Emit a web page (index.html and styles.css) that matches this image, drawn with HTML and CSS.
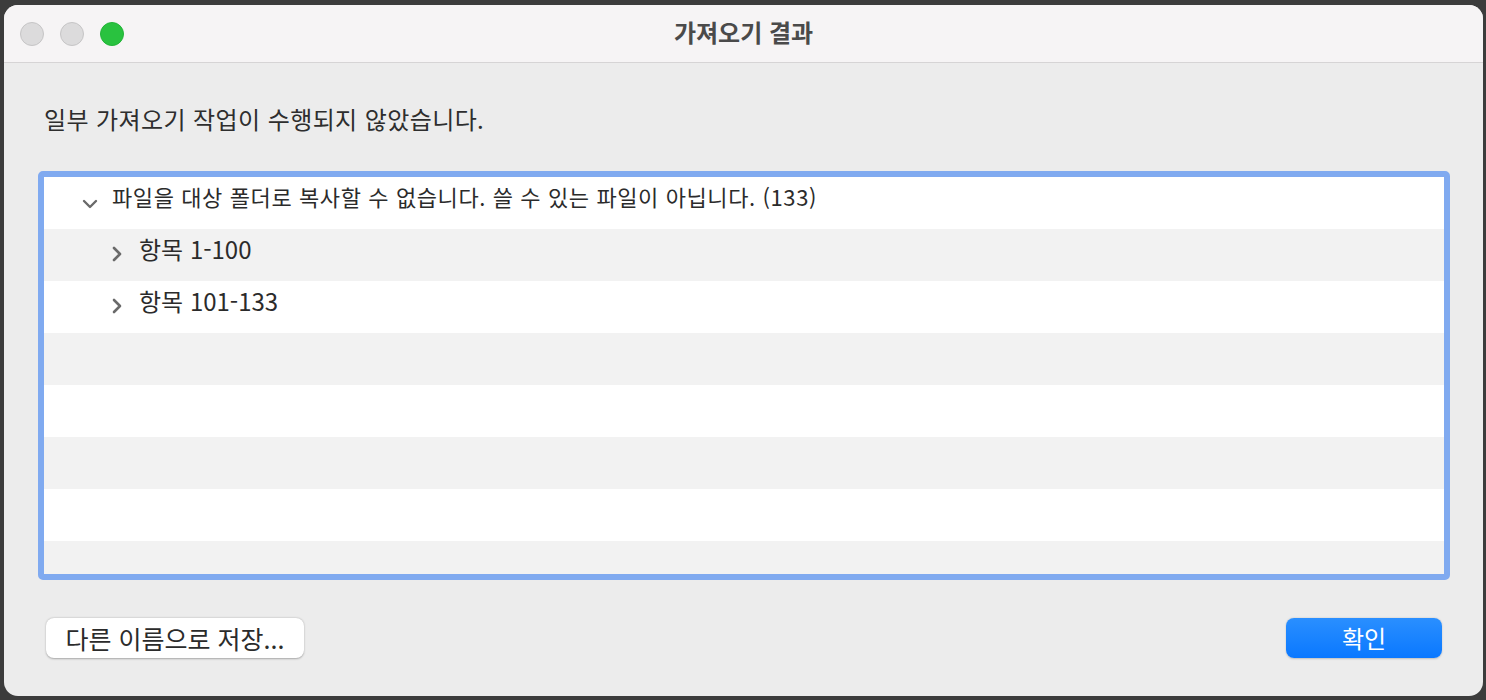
FILE: index.html
```html
<!DOCTYPE html>
<html lang="ko">
<head>
    <meta charset="UTF-8">
    <meta name="viewport" content="width=device-width, initial-scale=1.0">
    <title>가져오기 결과</title>
    <link rel="stylesheet" href="styles.css">
</head>
<body>
    <div class="window">
        <div class="titlebar">
            <div class="lights">
                <span class="light"></span>
                <span class="light"></span>
                <span class="light green"></span>
            </div>
            <div class="title">가져오기 결과</div>
        </div>
        <div class="content">
            <p class="message">일부 가져오기 작업이 수행되지 않았습니다.</p>
            <div class="list">
                <div class="row group">
                    <svg class="chev" width="16" height="10" viewBox="0 0 16 10"><path d="M2 2 L8 8 L14 2" fill="none" stroke="#6a6a6a" stroke-width="2.4" stroke-linecap="round" stroke-linejoin="round"/></svg>
                    <span>파일을 대상 폴더로 복사할 수 없습니다. 쓸 수 있는 파일이 아닙니다. (133)</span>
                </div>
                <div class="row item">
                    <svg class="chev" width="10" height="16" viewBox="0 0 10 16"><path d="M2 2 L8 8 L2 14" fill="none" stroke="#6a6a6a" stroke-width="2.6" stroke-linecap="round" stroke-linejoin="round"/></svg>
                    <span>항목 1-100</span>
                </div>
                <div class="row item">
                    <svg class="chev" width="10" height="16" viewBox="0 0 10 16"><path d="M2 2 L8 8 L2 14" fill="none" stroke="#6a6a6a" stroke-width="2.6" stroke-linecap="round" stroke-linejoin="round"/></svg>
                    <span>항목 101-133</span>
                </div>
                <div class="row"></div>
                <div class="row"></div>
                <div class="row"></div>
                <div class="row"></div>
                <div class="row"></div>
            </div>
            <div class="buttons">
                <button class="btn">다른 이름으로 저장...</button>
                <button class="btn primary">확인</button>
            </div>
        </div>
    </div>
</body>
</html>
```

FILE: styles.css
```css
body {
    margin: 0;
    padding: 5px 3px 4px 4px;
    background-color: #3c3c3c;
    font-family: "Noto Sans CJK KR", "Noto Sans", sans-serif;
    color: #2b2b2b;
}
.window {
    height: 691px;
    border-radius: 14px;
    overflow: hidden;
    background-color: #ececec;
    display: flex;
    flex-direction: column;
}
.titlebar {
    position: relative;
    height: 57px;
    background-color: #f6f4f5;
    border-bottom: 1px solid #d6d4d5;
    display: flex;
    align-items: center;
    justify-content: center;
}
.lights {
    position: absolute;
    left: 16px;
    top: 17px;
    display: flex;
    gap: 16px;
}
.light {
    width: 22px;
    height: 22px;
    border-radius: 50%;
    background-color: #dcdbdc;
    border: 1px solid #c6c5c6;
}
.light.green {
    background-color: #29c23f;
    border-color: #22b437;
}
.title {
    font-size: 24px;
    font-weight: bold;
    color: #4a4a4a;
    margin-top: -4px;
}
.content {
    flex: 1;
    padding: 0 33px 0 34px;
    display: flex;
    flex-direction: column;
}
.message {
    margin: 40px 0 0 6px;
    font-size: 24px;
    letter-spacing: 0.4px;
    line-height: 32px;
    color: #2e2e2e;
}
.list {
    margin-top: 36px;
    height: 397px;
    border: 6px solid #80aaf0;
    border-radius: 5px;
    background-color: #fff;
    overflow: hidden;
}
.row {
    height: 52px;
    display: flex;
    align-items: center;
}
.row:nth-child(even) {
    background-color: #f2f2f2;
}
.row span {
    padding-bottom: 14px;
}
.row.group {
    padding-left: 38px;
    gap: 14px;
    font-size: 22px;
    letter-spacing: 0.6px;
}
.row.group .chev {
    margin-top: 2px;
}
.row.item {
    padding-left: 68px;
    gap: 17px;
    font-size: 24px;
}
.row.item .chev {
    margin-top: -2px;
}
.buttons {
    margin-top: 38px;
    display: flex;
    justify-content: space-between;
    padding: 0 8px 0 8px;
}
.btn {
    height: 40px;
    width: 258px;
    border: none;
    border-radius: 8px;
    background-color: #fff;
    box-shadow: 0 0.5px 2px rgba(0, 0, 0, 0.3);
    font-family: inherit;
    font-size: 25px;
    line-height: 40px;
    padding: 0 0 4px 0;
    color: #2b2b2b;
}
.btn.primary {
    width: 156px;
    font-size: 24px;
    color: #fff;
    background: linear-gradient(#2a8fff, #0a78ff);
    box-shadow: 0 0.5px 2px rgba(0, 0, 0, 0.2);
}
```
